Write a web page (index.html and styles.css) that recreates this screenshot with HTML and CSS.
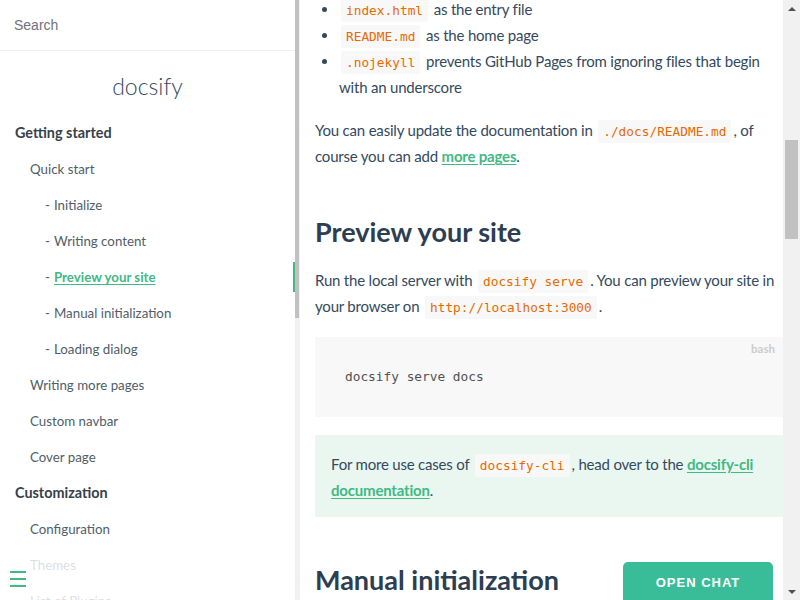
FILE: index.html
```html
<!DOCTYPE html>
<html lang="en">
<head>
<meta charset="utf-8">
<title>docsify</title>
<link rel="stylesheet" href="styles.css">
</head>
<body>
<div class="app">
  <aside class="sidebar">
    <div class="sidebar-inner">
      <div class="search"><input type="search" placeholder="Search"></div>
      <h1 class="app-name">docsify</h1>
      <nav class="sidebar-nav">
        <ul class="top">
          <li><p class="group">Getting started</p>
            <ul>
              <li><a>Quick start</a>
                <ul class="sub">
                  <li><a>Initialize</a></li>
                  <li><a>Writing content</a></li>
                  <li class="active"><a>Preview your site</a></li>
                  <li><a>Manual initialization</a></li>
                  <li><a>Loading dialog</a></li>
                </ul>
              </li>
              <li><a>Writing more pages</a></li>
              <li><a>Custom navbar</a></li>
              <li><a>Cover page</a></li>
            </ul>
          </li>
          <li><p class="group">Customization</p>
            <ul>
              <li><a>Configuration</a></li>
              <li><a>Themes</a></li>
              <li><a>List of Plugins</a></li>
            </ul>
          </li>
        </ul>
      </nav>
    </div>
    <div class="side-scroll"><div class="side-thumb"></div></div>
    <button class="sidebar-toggle" aria-label="toggle"><span></span><span></span><span></span></button>
  </aside>

  <main class="content">
    <article class="markdown-section">
      <ul class="files">
        <li><code>index.html</code> as the entry file</li>
        <li><code>README.md</code> as the home page</li>
        <li><code>.nojekyll</code> prevents GitHub Pages from ignoring files that begin with an underscore</li>
      </ul>
      <p>You can easily update the documentation in <code>./docs/README.md</code>, of course you can add <a class="link">more pages</a>.</p>
      <h2>Preview your site</h2>
      <p>Run the local server with <code>docsify serve</code>. You can preview your site in your browser on <code>http://localhost:3000</code>.</p>
      <pre class="codeblock" data-lang="bash"><span class="lang">bash</span><code>docsify serve docs</code></pre>
      <p class="tip">For more use cases of <code>docsify-cli</code>, head over to the <a class="link">docsify-cli documentation</a>.</p>
      <h2>Manual initialization</h2>
    </article>
  </main>

  <div class="page-scroll">
    <div class="arrow up"></div>
    <div class="track"><div class="thumb"></div></div>
    <div class="arrow down"></div>
  </div>

  <button class="open-chat">OPEN CHAT</button>
</div>
</body>
</html>
```

FILE: styles.css
```css
html, body {
  margin: 0;
  padding: 0;
  height: 100%;
  overflow: hidden;
}
body {
  font-family: Lato, "Source Sans Pro", "Helvetica Neue", Arial, sans-serif;
  color: #34495e;
  background: #fff;
}
.app {
  display: flex;
  height: 600px;
  position: relative;
  overflow: hidden;
}

/* ---------- sidebar ---------- */
.sidebar {
  width: 300px;
  flex: none;
  display: flex;
  position: relative;
  overflow: hidden;
}
.sidebar-inner {
  width: 295px;
  flex: none;
}
.search {
  height: 50px;
  border-bottom: 1px solid #eee;
  display: flex;
  align-items: center;
  padding: 0 14px;
}
.search input {
  border: none;
  outline: none;
  padding: 0;
  margin: 0;
  width: 100%;
  font-family: "Liberation Sans", Arial, sans-serif;
  font-size: 14px;
  color: #34495e;
  background: transparent;
}
.search input::placeholder {
  color: #6f737a;
}
.app-name {
  margin: 17px 0 14px;
  text-align: center;
  font-size: 23px;
  font-weight: 300;
  line-height: 36px;
  color: #34495e;
}
.sidebar-nav ul {
  list-style: none;
  margin: 0;
  padding: 0;
}
.sidebar-nav .top {
  padding-left: 15px;
}
.sidebar-nav .top > li > ul {
  padding-left: 15px;
}
.sidebar-nav .sub {
  padding-left: 15px;
}
.sidebar-nav li {
  margin: 6px 0;
}
.sidebar-nav .top > li {
  margin: 0;
}
.group {
  margin: 0 0 6px;
  line-height: 30px;
  font-size: 14.4px;
  font-weight: 700;
  color: #364149;
}
.sidebar-nav a {
  display: block;
  line-height: 30px;
  font-size: 13.3px;
  color: #505d6b;
  text-decoration: none;
}
.sidebar-nav .sub a {
  display: inline-block;
}
.sidebar-nav .sub li::before {
  content: "-";
  padding-right: 4px;
  font-size: 13.3px;
  line-height: 30px;
  color: #505d6b;
}
.sidebar-nav li.active {
  border-right: 2px solid #42b983;
}
.sidebar-nav li.active a {
  color: #42b983;
  font-weight: 700;
  text-decoration: underline;
  text-underline-offset: 2px;
}
.side-scroll {
  width: 5px;
  flex: none;
  background: #f1f1f1;
}
.side-thumb {
  width: 4px;
  height: 318px;
  background: #c1c1c1;
}
.sidebar-toggle {
  position: absolute;
  left: 0;
  bottom: 0;
  width: 284px;
  height: 48px;
  border: none;
  margin: 0;
  padding: 19px 0 0 10px;
  background: rgba(255, 255, 255, 0.8);
  display: flex;
  flex-direction: column;
  align-items: flex-start;
  gap: 5px;
  box-sizing: border-box;
}
.sidebar-toggle span {
  display: block;
  width: 16px;
  height: 2px;
  background: #42b983;
}

/* ---------- content ---------- */
.content {
  flex: 1;
  min-width: 0;
  overflow: hidden;
}
.markdown-section {
  margin-top: -4px;
  padding-left: 15px;
  font-size: 15px;
  line-height: 26px;
  letter-spacing: -0.2px;
}
.markdown-section p,
.markdown-section ul {
  margin: 17px 0;
  line-height: 26px;
}
.markdown-section .files {
  margin-top: 0;
  padding-left: 24px;
  list-style: disc;
}
.markdown-section code {
  font-family: "DejaVu Sans Mono", "Liberation Mono", monospace;
  font-size: 12.8px;
  line-height: 1;
  letter-spacing: 0;
  color: #e96900;
  background: #f8f8f8;
  border-radius: 2px;
  padding: 4px 5px;
  margin: 0 2px;
}
.link {
  color: #42b983;
  font-weight: 700;
  text-decoration: underline;
  text-underline-offset: 2px;
}
.markdown-section h2 {
  margin: 43px 0 15px;
  font-size: 27px;
  line-height: 40px;
  font-weight: 700;
  letter-spacing: 0;
  color: #2c3e50;
}
.codeblock {
  position: relative;
  margin: 18px 0;
  height: 80px;
  box-sizing: border-box;
  padding: 0 30px;
  background: #f8f8f8;
  display: flex;
  align-items: center;
}
.codeblock code {
  padding: 0;
  margin: 0;
  color: #525252;
  font-size: 12.8px;
  background: none;
}
.codeblock .lang {
  position: absolute;
  top: 5px;
  right: 8px;
  font-family: Lato, Arial, sans-serif;
  font-size: 11.5px;
  font-weight: 700;
  line-height: 14px;
  letter-spacing: 0;
  color: #ccc;
}
.markdown-section p.tip {
  background: #eaf7f1;
  margin: 18px 0;
  padding: 16px 16px 14px;
}
.markdown-section h2 + p,
.codeblock + p {
  margin-top: 0;
}

/* ---------- page scrollbar ---------- */
.page-scroll {
  width: 17px;
  flex: none;
  background: #f1f1f1;
  display: flex;
  flex-direction: column;
}
.arrow {
  height: 17px;
  flex: none;
  display: flex;
  align-items: center;
  justify-content: center;
}
.arrow::before {
  content: "";
  width: 0;
  height: 0;
  border-left: 4px solid transparent;
  border-right: 4px solid transparent;
}
.arrow.up::before {
  border-bottom: 4px solid #505050;
}
.arrow.down::before {
  border-top: 4px solid #505050;
}
.track {
  flex: 1;
}
.thumb {
  margin: 123px 2px 0;
  height: 99px;
  background: #c1c1c1;
}

/* ---------- chat button ---------- */
.open-chat {
  position: absolute;
  right: 27px;
  bottom: -2px;
  width: 150px;
  height: 40px;
  border: none;
  border-radius: 5px 5px 0 0;
  background: #39bd99;
  color: #fff;
  font-family: "Liberation Sans", Arial, sans-serif;
  font-size: 13px;
  font-weight: 700;
  letter-spacing: 1px;
  padding: 0;
}
```
